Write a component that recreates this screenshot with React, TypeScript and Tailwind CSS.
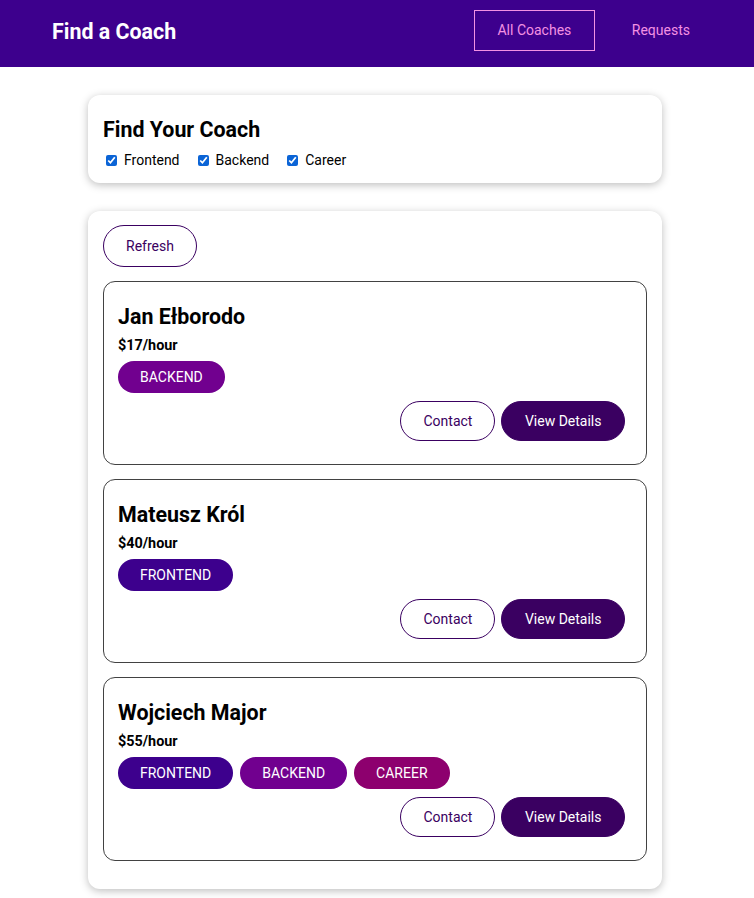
import React from "react";

type Coach = { name: string; rate: number; areas: string[] };

const coaches: Coach[] = [
  { name: "Jan Ełborodo", rate: 17, areas: ["backend"] },
  { name: "Mateusz Król", rate: 40, areas: ["frontend"] },
  { name: "Wojciech Major", rate: 55, areas: ["frontend", "backend", "career"] },
];

function Badge({ area }: { area: string }) {
  const cls =
    area === "frontend"
      ? "bg-[#3d008d]"
      : area === "backend"
      ? "bg-[#71008f]"
      : "bg-[#8d006e]";
  return (
    <span
      className={`${cls} inline-flex h-[32px] items-center rounded-full px-[22px] text-[14px] uppercase text-white mr-[7px]`}
    >
      {area}
    </span>
  );
}

export default function App() {
  return (
    <div
      className="min-h-screen bg-white text-black"
      style={{ fontFamily: "Roboto, 'Liberation Sans', sans-serif" }}
    >
      <header className="flex h-[67px] items-center justify-between bg-[#3d008d] pb-[6px] pl-[52px] pr-[40px]">
        <h1 className="pt-[3px] text-[21.4px] font-bold text-white">Find a Coach</h1>
        <nav className="flex items-center gap-[13px]">
          <a className="flex h-[41px] items-center border border-[#f391e3] px-[22.5px] text-[14px] text-[#f391e3]">
            All Coaches
          </a>
          <a className="flex h-[41px] items-center border border-transparent px-[23px] text-[14px] text-[#f391e3]">
            Requests
          </a>
        </nav>
      </header>

      <main className="flex flex-col pl-[88px] pt-[28px] pb-[28px]">
        <section className="w-[574px] rounded-[12px] bg-white px-[15px] pt-[21px] pb-[14px] shadow-[0_2px_8px_rgba(0,0,0,0.26)]">
          <h2 className="text-[21.4px] font-bold leading-[28px]">Find Your Coach</h2>
          <div className="mt-[7px] flex items-center text-[14px] leading-[18px]">
            <label className="flex items-center">
              <input type="checkbox" defaultChecked className="m-0 ml-[3px] mr-[7px] h-[11px] w-[11px] accent-[#0b64d6]" />
              Frontend
            </label>
            <label className="ml-[18px] flex items-center">
              <input type="checkbox" defaultChecked className="m-0 mr-[7px] h-[11px] w-[11px] accent-[#0b64d6]" />
              Backend
            </label>
            <label className="ml-[18px] flex items-center">
              <input type="checkbox" defaultChecked className="m-0 mr-[7px] h-[11px] w-[11px] accent-[#0b64d6]" />
              Career
            </label>
          </div>
        </section>

        <section className="mt-[28px] w-[574px] rounded-[12px] bg-white px-[15px] pt-[14px] pb-[28px] shadow-[0_2px_8px_rgba(0,0,0,0.26)]">
          <div>
            <button className="h-[42px] rounded-full border border-[#3a0061] px-[22px] text-[14px] text-[#3a0061]">
              Refresh
            </button>
          </div>
          <ul className="mt-[14px] flex flex-col gap-[14px]">
            {coaches.map((c) => (
              <li
                key={c.name}
                className="rounded-[12px] border border-[#424242] px-[14px] pt-[22px] pb-[23px]"
              >
                <h3 className="text-[21.4px] font-bold leading-[25px]">{c.name}</h3>
                <h4 className="mt-[8px] text-[14.4px] font-bold leading-[18px]">${c.rate}/hour</h4>
                <div className="mt-[6px] flex">
                  {c.areas.map((a) => (
                    <Badge key={a} area={a} />
                  ))}
                </div>
                <div className="mt-[8px] flex justify-end pr-[7px]">
                  <button className="mr-[6px] h-[40px] rounded-full border border-[#3a0061] px-[22px] text-[14px] text-[#3a0061]">
                    Contact
                  </button>
                  <button className="h-[40px] rounded-full border border-[#3a0061] bg-[#3a0061] px-[22.5px] text-[14px] text-white">
                    View Details
                  </button>
                </div>
              </li>
            ))}
          </ul>
        </section>
      </main>
    </div>
  );
}
